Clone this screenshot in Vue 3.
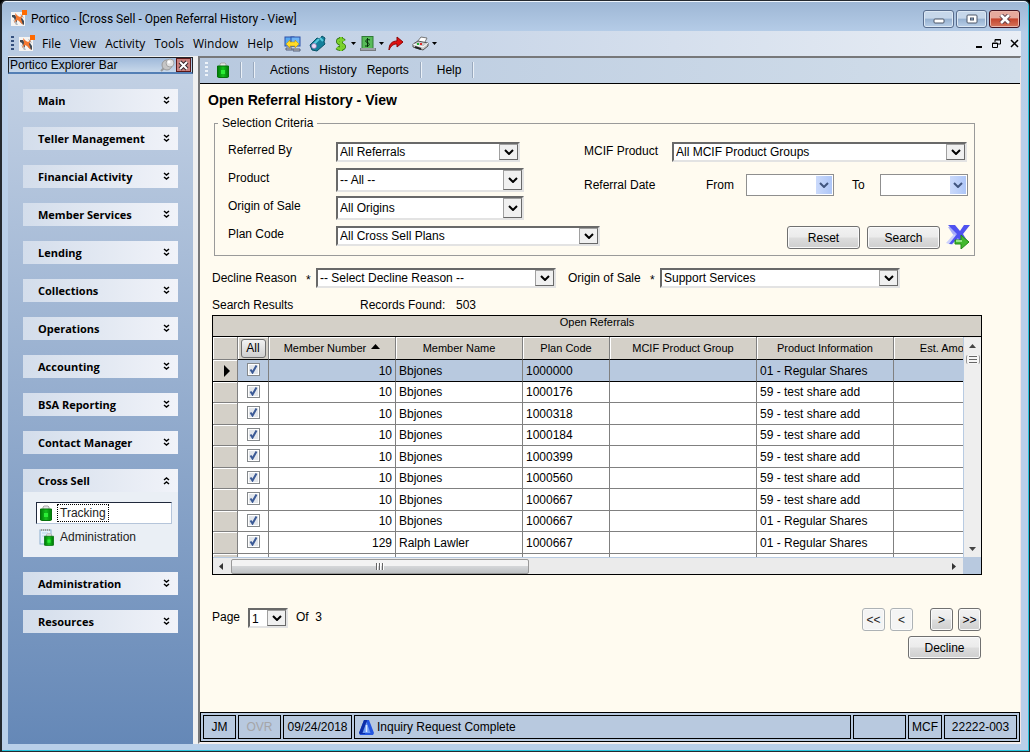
<script setup>
import { ref } from 'vue'

const menus = ['File', 'View', 'Activity', 'Tools', 'Window', 'Help']
const groups = [
  'Main', 'Teller Management', 'Financial Activity', 'Member Services', 'Lending',
  'Collections', 'Operations', 'Accounting', 'BSA Reporting', 'Contact Manager',
  'Cross Sell', 'Administration', 'Resources'
]
const openGroup = ref('Cross Sell')

const filters = [
  { id: 'referred', label: 'Referred By', value: 'All Referrals', size: 'w-short' },
  { id: 'product', label: 'Product', value: '-- All --', size: 'w-mid tall' },
  { id: 'origin', label: 'Origin of Sale', value: 'All Origins', size: 'w-mid tall' },
  { id: 'plan', label: 'Plan Code', value: 'All Cross Sell Plans', size: 'w-long' }
]

const rows = ref([
  ['10', 'Bbjones', '1000000', '01 - Regular Shares'],
  ['10', 'Bbjones', '1000176', '59 - test share add'],
  ['10', 'Bbjones', '1000318', '59 - test share add'],
  ['10', 'Bbjones', '1000184', '59 - test share add'],
  ['10', 'Bbjones', '1000399', '59 - test share add'],
  ['10', 'Bbjones', '1000560', '59 - test share add'],
  ['10', 'Bbjones', '1000667', '59 - test share add'],
  ['10', 'Bbjones', '1000667', '01 - Regular Shares'],
  ['129', 'Ralph Lawler', '1000667', '01 - Regular Shares']
].map(([number, name, plan, product]) => ({ number, name, plan, product, checked: true })))
</script>

<template>
  <div class="window">
    <svg class="defs" width="0" height="0" aria-hidden="true">
      <defs>
        <linearGradient id="green" x1="0" x2="1">
          <stop offset="0" stop-color="#007a08" /><stop offset=".5" stop-color="#14c01c" /><stop offset="1" stop-color="#007a08" />
        </linearGradient>
        <symbol id="logo" viewBox="0 0 17 17">
          <rect y="2" width="14" height="14" fill="#f6f4f2" />
          <path d="M1 5h3l2 3v5l-2-2-1-3-2-1z" fill="#3f4a55" />
          <path d="M8 7l3 1 2 3v4l-3-2-2-3z" fill="#3f4a55" />
          <path d="M2 10l3 1 2 4H5z" fill="#b4b9bf" />
          <path d="M9 4l2 1 2 3-2-1z" fill="#9aa0a8" />
          <path d="M4 3l3 3 2 1 3-2-2 4 2 6-4-4-2-1-3 3 2-5z" fill="#f4772f" />
          <rect x="11" y="0" width="5" height="5" fill="#ff6a00" />
        </symbol>
        <symbol id="bag" viewBox="0 0 12 16">
          <path d="M3 5V2l1-1h4l1 1v3" fill="#e6e6e6" stroke="#a9a9a9" />
          <path d="M.5 4h11v11l-1 .500h-9l-1-.500z" fill="url(#green)" stroke="#04720a" />
          <rect x="4" y="8" width="4" height="4" fill="#2bec36" />
        </symbol>
        <symbol id="down" viewBox="0 0 10 6">
          <path d="M1 1l4 4 4-4" fill="none" stroke="currentColor" stroke-width="2" />
        </symbol>
        <symbol id="chev" viewBox="0 0 7 9">
          <path d="M1 1l2.500 2L6 1M1 5l2.500 2L6 5" fill="none" stroke="#000" stroke-width="1.500" />
        </symbol>
        <symbol id="caret" viewBox="0 0 5 3"><path d="M0 0h5L2.500 3z" fill="#000" /></symbol>
      </defs>
    </svg>

    <header class="titlebar">
      <svg width="17" height="17" aria-hidden="true"><use href="#logo" /></svg>
      <span class="title">Portico - [Cross Sell - Open Referral History - View]</span>
      <div class="winbtns">
        <button class="wb" aria-label="Minimize"><svg width="12" height="10"><rect x="1" y="5" width="10" height="4" rx="1" fill="#fff" stroke="#4c5768" /></svg></button>
        <button class="wb" aria-label="Maximize"><svg width="12" height="10"><rect x="1" y="1" width="10" height="8" rx="1" fill="#fff" stroke="#4c5768" /><rect x="4.500" y="4" width="3" height="2" fill="#8fb1d6" stroke="#4c5768" /></svg></button>
        <button class="wb close" aria-label="Close"><svg width="12" height="10"><path d="M2 1l8 8M10 1l-8 8" stroke="#5a3a44" stroke-width="4.500" /><path d="M2 1l8 8M10 1l-8 8" stroke="#fff" stroke-width="2.600" /></svg></button>
      </div>
    </header>

    <div class="client">
      <nav class="menubar" aria-label="Main menu">
        <span class="grip dark"></span>
        <svg class="menulogo" width="17" height="17" aria-hidden="true"><use href="#logo" /></svg>
        <button v-for="m in menus" :key="m" class="menu">{{ m }}</button>
        <div class="tools">
          <button aria-label="Transfer"><svg width="17" height="16">
            <rect x="1" y="1" width="9" height="9" fill="#58a8f0" stroke="#2c50a8" /><rect x="7" y="1" width="9" height="9" fill="#6fb4f4" stroke="#2c50a8" />
            <path d="M2 12h6v2H2zM9 13h7v2H9z" fill="#c8c4bc" stroke="#55617c" />
            <path d="M2 8l4-4v2h5V4l4 4-4 4v-2H6v2z" fill="#ffdc28" stroke="#b58a00" stroke-width=".5" /></svg></button>
          <button aria-label="Lookup"><svg width="17" height="17">
            <path d="M1 10l7-7 3 1 2-3 3 2-1 4 1 2-8 7-5-1z" fill="#14809c" stroke="#075267" /><path d="M4 10l6-6M11 3l3 3" stroke="#55c9dc" stroke-width="2" /><circle cx="5" cy="11" r="2.500" fill="#eadcf4" stroke="#885aa0" stroke-width=".6" /></svg></button>
          <button class="drop" aria-label="Money"><svg width="14" height="16">
            <path d="M10 5C9 3 4 3 4 5.500s6 2.500 6 5-5 3-7 1M7 1v14" fill="none" stroke="#2b6c10" stroke-width="4" /><path d="M10 5C9 3 4 3 4 5.500s6 2.500 6 5-5 3-7 1M7 1v14" fill="none" stroke="#7bd22c" stroke-width="2.500" /></svg><svg width="5" height="3"><use href="#caret" /></svg></button>
          <button class="drop" aria-label="Cash drawer"><svg width="16" height="16">
            <rect x="2" y=".5" width="11" height="12" fill="#58bb58" stroke="#2f7a35" /><path d="M10 4C7 3 5 4 6 6c4 1 4 3 2 4H5M7.500 2v9" fill="none" stroke="#06320b" /><path d="M0 12h16v3H0z" fill="#777b80" /><path d="M1 13h14" stroke="#c5c8cb" /></svg><svg width="5" height="3"><use href="#caret" /></svg></button>
          <button aria-label="Forward"><svg width="16" height="15"><path d="M1 14c0-6 3-9 8-9V1l6 5-6 5V8c-4 0-6 2-8 6z" fill="#e01010" stroke="#8c0505" /></svg></button>
          <button class="drop" aria-label="Print"><svg width="17" height="15">
            <path d="M5 6l4-5 6 1-3 6z" fill="#fff" stroke="#777" /><path d="M1 8l5-3 10 2v3l-5 4-10-3z" fill="#c9c9c9" stroke="#555" /><path d="M1 8l10 3 5-4" fill="none" stroke="#fff" /><path d="M3 11l6 2" stroke="#222" stroke-width="2" /><rect x="5" y="7" width="2" height="2" fill="#20b030" /><rect x="8" y="7" width="2" height="2" fill="#e02a2a" /></svg><svg width="5" height="3"><use href="#caret" /></svg></button>
        </div>
        <div class="mdi">
          <button aria-label="Minimize document"><svg width="8" height="9"><path d="M1 8h6" stroke="#000" stroke-width="2" /></svg></button>
          <button aria-label="Restore document"><svg width="9" height="9"><path d="M3 3V.5h5.500V5H6M.5 4h5v4.500h-5zM3 1h6M0 4.500h6" fill="none" stroke="#000" /></svg></button>
          <button aria-label="Close document"><svg width="9" height="9"><path d="M1 1l7 7M8 1L1 8" stroke="#000" stroke-width="1.500" /></svg></button>
        </div>
      </nav>

      <div class="body">
        <aside class="sidebar">
          <div class="barhead">
            <span>Portico Explorer Bar</span>
            <button class="pin" aria-label="Pin"><svg width="15" height="14"><path d="M1 13l4-4" stroke="#999" stroke-width="2" /><ellipse cx="7" cy="7" rx="5" ry="5" fill="#c6c6c6" stroke="#9a9a9a" /><circle cx="10" cy="5" r="4" fill="#e2e2e2" stroke="#a5a5a5" /><circle cx="9" cy="4" r="1.500" fill="#fff" /></svg></button>
            <button class="barclose" aria-label="Close bar"><svg width="11" height="11"><path d="M2 2l7 7M9 2L2 9" stroke="#33262c" stroke-width="4" /><path d="M2 2l7 7M9 2L2 9" stroke="#fff" stroke-width="2" /></svg></button>
          </div>
          <nav class="groups" aria-label="Explorer">
            <section v-for="g in groups" :key="g">
              <button class="group" @click="openGroup = g">
                {{ g }}
                <svg width="7" height="9" :class="{ flip: openGroup === g }" aria-hidden="true"><use href="#chev" /></svg>
              </button>
              <div v-if="g === 'Cross Sell' && openGroup === g" class="panel">
                <a href="#tracking" class="item active">
                  <svg width="12" height="16" aria-hidden="true"><use href="#bag" /></svg><span>Tracking</span>
                </a>
                <a href="#administration" class="item">
                  <svg width="16" height="17" aria-hidden="true"><rect x="1" y="1" width="11" height="14" fill="#e5f1fa" stroke="#8cafd0" /><path d="M2 1h9" stroke="#8a6b3a" stroke-dasharray="1 1" /><path d="M3 4h6M3 7h4" stroke="#b9d4ea" /><use href="#bag" x="5" y="4" width="10" height="13" /></svg><span>Administration</span>
                </a>
              </div>
            </section>
          </nav>
        </aside>

        <main class="main">
          <nav class="toolbar" aria-label="Page menu">
            <span class="grip"></span>
            <button class="bagbtn" aria-label="Tracking"><svg width="12" height="16"><use href="#bag" /></svg></button>
            <i class="sep"></i><i class="sep"></i>
            <button class="act">Actions</button><button class="act">History</button><button class="act">Reports</button>
            <i class="sep"></i>
            <button class="act">Help</button>
            <i class="sep"></i>
          </nav>

          <div class="content">
            <h1>Open Referral History - View</h1>
            <fieldset>
              <legend>Selection Criteria</legend>
              <div class="criteria">
                <div class="left">
                  <div v-for="f in filters" :key="f.id" class="frow">
                    <label :for="f.id">{{ f.label }}</label>
                    <span class="combo" :class="f.size">
                      <select :id="f.id"><option>{{ f.value }}</option></select>
                      <span class="arrow"><svg width="10" height="6"><use href="#down" /></svg></span>
                    </span>
                  </div>
                </div>
                <div class="right">
                  <div class="frow">
                    <label class="lab" for="mcif">MCIF Product</label>
                    <span class="combo grow">
                      <select id="mcif"><option>All MCIF Product Groups</option></select>
                      <span class="arrow"><svg width="10" height="6"><use href="#down" /></svg></span>
                    </span>
                  </div>
                  <div class="frow dates">
                    <span class="grow">Referral Date</span>
                    <label for="from">From</label>
                    <span class="date"><input id="from" type="text"><button aria-label="Pick start date"><svg width="10" height="6"><use href="#down" /></svg></button></span>
                    <label for="to" class="to">To</label>
                    <span class="date"><input id="to" type="text"><button aria-label="Pick end date"><svg width="10" height="6"><use href="#down" /></svg></button></span>
                  </div>
                  <div class="actions">
                    <button class="btn">Reset</button>
                    <button class="btn">Search</button>
                    <button class="export" aria-label="Export"><svg width="24" height="24">
                      <path d="M2 2h8l9 15h-7z" fill="#a9adf8" /><path d="M0 18l8-9 4 4-6 7z" fill="#cdd1fb" /><path d="M2 0h7l5 6 4-6h6l-7 9 5 8-6 2-4-6-6 6H3l8-10z" fill="#4f52f0" />
                      <path d="M9 15h6v-5l8 7-8 7v-5H9z" fill="#43b82e" stroke="#258a17" /><path d="M10 16h6" stroke="#93e384" stroke-width="2" /></svg></button>
                  </div>
                </div>
              </div>
            </fieldset>

            <div class="reason">
              <label class="l1" for="reason">Decline Reason</label><span class="star">*</span>
              <span class="combo"><select id="reason"><option>-- Select Decline Reason --</option></select><span class="arrow"><svg width="10" height="6"><use href="#down" /></svg></span></span>
              <label class="l2" for="sale">Origin of Sale</label><span class="star">*</span>
              <span class="combo"><select id="sale"><option>Support Services</option></select><span class="arrow"><svg width="10" height="6"><use href="#down" /></svg></span></span>
            </div>

            <div class="results"><span class="rl">Search Results</span><span class="rf">Records Found:</span><span>503</span></div>

            <div class="grid">
              <div class="caption">Open Referrals</div>
              <div class="view">
                <div class="pane">
                  <table>
                    <colgroup><col class="c0"><col class="c1"><col class="c2"><col class="c2"><col class="c4"><col class="c5"><col class="c6"><col class="c7"></colgroup>
                    <thead>
                      <tr>
                        <th></th>
                        <th><button class="all">All</button></th>
                        <th>Member Number <svg width="9" height="5"><path d="M0 5h9L4.500 0z" fill="#000" /></svg></th>
                        <th>Member Name</th><th>Plan Code</th><th>MCIF Product Group</th><th>Product Information</th><th>Est. Amount</th>
                      </tr>
                    </thead>
                    <tbody>
                      <tr v-for="(r, i) in rows" :key="i" :class="{ sel: i === 0 }">
                        <td class="rowhead"><svg v-if="i === 0" width="6" height="12"><path d="M0 0v12l6-6z" fill="#000" /></svg></td>
                        <td class="chk"><input v-model="r.checked" type="checkbox" :aria-label="'Select plan ' + r.plan"></td>
                        <td class="num">{{ r.number }}</td><td>{{ r.name }}</td><td>{{ r.plan }}</td><td></td><td>{{ r.product }}</td><td></td>
                      </tr>
                      <tr><td class="rowhead"></td><td></td><td></td><td></td><td></td><td></td><td></td><td></td></tr>
                    </tbody>
                  </table>
                </div>
                <div class="vscroll">
                  <svg width="7" height="4"><path d="M0 4h7L3.500 0z" fill="#444" /></svg>
                  <span class="vthumb"></span>
                  <svg class="end" width="7" height="4"><path d="M0 0h7L3.500 4z" fill="#444" /></svg>
                </div>
              </div>
              <div class="hrow">
                <div class="hscroll">
                  <svg class="harrow" width="4" height="7"><path d="M4 0v7L0 3.500z" fill="#333" /></svg>
                  <span class="hthumb"><i></i><i></i><i></i></span>
                  <svg class="harrow end" width="4" height="7"><path d="M0 0v7l4-3.500z" fill="#333" /></svg>
                </div>
                <span class="corner"></span>
              </div>
            </div>

            <div class="pager">
              <label for="page">Page</label>
              <span class="combo pg"><select id="page"><option>1</option></select><span class="arrow"><svg width="10" height="6"><use href="#down" /></svg></span></span>
              <span class="of">Of&nbsp; 3</span>
              <div class="nav">
                <button class="btn sq" disabled>&lt;&lt;</button><button class="btn sq" disabled>&lt;</button>
                <button class="btn sq next">&gt;</button><button class="btn sq">&gt;&gt;</button>
              </div>
            </div>
            <div class="decline"><button class="btn">Decline</button></div>
          </div>

          <footer class="status">
            <span class="s-jm">JM</span><span class="s-ovr">OVR</span><span class="s-date">09/24/2018</span>
            <span class="s-msg"><svg width="17" height="17" aria-hidden="true"><path d="M6 1h5l5 13-1 2H2l-1-2z" fill="#2456e0" /><path d="M6 1h3L7 15H2l-1-1z" fill="#0d2fa8" /><path d="M8.500 3l4 11h-8z" fill="#6b9af5" /><path d="M8.500 6v7" stroke="#dce8ff" stroke-width="1.500" /></svg>Inquiry Request Complete</span>
            <span class="s-empty"></span><span class="s-mcf">MCF</span><span class="s-code">22222-003</span>
          </footer>
        </main>
      </div>
    </div>
  </div>
</template>

<style>
body { background: #000; }
</style>

<style scoped>
.window, .window * { box-sizing: border-box; }
.window {
  min-height: 100vh; display: flex; flex-direction: column;
  border: solid #24292f; border-width: 1px 1px 1px 2px; border-radius: 6px 6px 0 0;
  box-shadow: inset -1px -1px 0 #27c4dc, inset 0 1px 0 #eef5fc;
  background: linear-gradient(#9db6d4, #b6cde8 32px, #b9cfe9 120px, #b9cfe9);
  font: 12px/16px "Liberation Sans", Arial, sans-serif; color: #000;
}
.defs { position: absolute; }
button { font: inherit; color: inherit; border: 0; padding: 0; background: none; display: flex; align-items: center; justify-content: center; }
svg { display: block; flex: none; }

.titlebar { height: 30px; display: flex; align-items: center; padding: 5px 9px 0 9px; }
.title { margin-left: 3px; flex: 1; white-space: nowrap; font-family: Roboto, "Noto Sans", sans-serif; }
.winbtns { display: flex; gap: 2px; }
.wb { width: 31px; height: 18px; border: 1px solid #586c8c; border-radius: 3px; background: linear-gradient(#c6d7ea 45%, #96b1d0 50%, #b9cfe8); box-shadow: inset 0 0 0 1px #dce8f4; }
.wb.close { border-color: #431422; background: linear-gradient(#e5a99d 42%, #c4452e 50%, #d5755c); box-shadow: inset 0 0 0 1px #eab7ac; }

.client { flex: 1; display: flex; flex-direction: column; margin: 0 8px 7px 6px; background: #f0f0f0; }
.menubar { height: 25px; display: flex; align-items: center; padding: 0 2px 0 3px; background: linear-gradient(90deg, #b9cbe2, #c9d6e8 45%, #e9eef5); font-family: "Open Sans", "Noto Sans", sans-serif; }
.grip { width: 3px; height: 16px; background: repeating-linear-gradient(#eef3f9 0 2px, transparent 2px 4px); }
.grip.dark { background: repeating-linear-gradient(#35507e 0 2px, transparent 2px 4px); }
.menulogo { margin: 0 6px 0 5px; }
.menu { margin-right: 9px; }
.tools { display: flex; gap: 8px; margin-left: 2px; }
.drop { gap: 3px; margin-right: -4px; }
.mdi { margin-left: auto; display: flex; gap: 9px; }

.body { flex: 1; display: flex; }
.sidebar { width: 185px; margin-top: 1px; background: linear-gradient(#c4d2e5, #6588b7); }
.barhead { height: 17px; display: flex; align-items: center; border: 1px solid #22262c; border-bottom: 2px solid #547fb5; background: linear-gradient(#9fb9da, #c8d8ea); padding-left: 1px; }
.barhead span { flex: 1; white-space: nowrap; }
.barclose { width: 15px; height: 14px; border: 1px solid #5b1818; background: #c97f7c; margin: 0 1px 0 1px; }
.groups { display: flex; flex-direction: column; gap: 15px; padding: 15px; }
.group { width: 100%; height: 23px; padding: 0 8px 0 15px; justify-content: space-between; font: bold 11px/16px "Open Sans", "Noto Sans", sans-serif; background: linear-gradient(90deg, #d3ddeb, #f1f3f9); }
.group svg.flip { transform: rotate(180deg); }
.panel { height: 65px; background: #eaeff5; padding: 10px 6px 0 13px; }
.item { display: flex; align-items: center; gap: 7px; height: 22px; padding-left: 3px; margin-bottom: 2px; color: #222; text-decoration: none; }
.item svg { margin-right: -2px; }
.item.active { background: #fff; border: 1px solid #20293c; border-right-color: #b5c5da; border-bottom-color: #b5c5da; }
.item.active span { border: 1px dotted #000; padding: 0 2px; }

.main { flex: 1; min-width: 0; margin-left: 5px; border: solid #77787a; border-width: 2px 0 0 2px; display: flex; flex-direction: column; background: #fffbf0; border-right: 1px solid #f4e6e4; border-bottom: 2px solid #f4eeee; }
.toolbar { height: 26px; display: flex; align-items: center; padding: 0 0 2px 5px; border-bottom: 1px solid #000; background: linear-gradient(90deg, #b8c9df, #d2deea); }
.bagbtn { margin: 0 11px 0 9px; }
.sep { width: 2px; height: 16px; background: #eaf0f7; border-left: 1px solid #99a9be; }
.sep + .sep { margin-left: 11px; }
.act { margin-left: 10px; }
.sep + .act { margin-left: 15px; }
.act + .sep { margin-left: 11px; }

.content { flex: 1; padding: 8px 38px 0 12px; }
h1 { margin: 0 0 7px -4px; font: bold 14px/16px "Liberation Sans", Arial, sans-serif; }
fieldset { margin: 0 7px 0 2px; padding: 7px 4px 5px 3px; border: 1px solid #9a9a9a; min-width: 0; }
legend { padding: 0 4px; }
.criteria { display: flex; padding-left: 10px; }
.left { width: 356px; flex: none; }
.right { flex: 1; min-width: 0; }
.frow { height: 28px; display: flex; align-items: center; padding-right: 3px; }
.left label { width: 108px; flex: none; padding-bottom: 4px; }
.lab { width: 88px; flex: none; padding-bottom: 3px; }
.grow { flex: 1; }
.dates { height: 38px; padding-right: 2px; }
.date { width: 88px; height: 22px; margin-left: 12px; display: flex; border: 1px solid #8f8f8f; background: #fff; padding: 1px; }
.date input { flex: 1; min-width: 0; border: 0; padding: 0 2px; font: inherit; background: none; }
.date button { width: 16px; color: #41557f; background: linear-gradient(90deg, #cbdafb, #aec6f7); }
.to { margin-left: 18px; width: 16px; }
.actions { height: 45px; display: flex; justify-content: flex-end; align-items: flex-end; gap: 7px; }
.export { margin-left: -1px; }

.combo { position: relative; display: inline-flex; flex: none; height: 20px; border: 2px solid #696969; border-right-color: #e3e3e3; border-bottom-color: #e3e3e3; background: #fff; }
.combo.grow { flex: 1; }
.combo.tall { height: 24px; }
.w-short { width: 184px; }
.w-mid { width: 188px; }
.w-long { width: 264px; }
select { appearance: none; width: 100%; border: 0; padding: 0 20px 0 2px; background: #fff; font: inherit; color: #000; border-radius: 0; }
.arrow { position: absolute; top: 0; right: 0; bottom: 0; width: 19px; display: flex; align-items: center; justify-content: center; border: 1px solid #a0a0a0; border-right-color: #696969; border-bottom-color: #696969; background: #f0f0f0; pointer-events: none; }

.btn { width: 73px; height: 23px; border: 1px solid #707070; border-radius: 3px; background: linear-gradient(#f2f2f2, #ebebeb 49%, #dddddd 51%, #cfcfcf); box-shadow: inset 0 0 0 1px #fafafa; }
.btn.sq { width: 23px; }
.btn:disabled { border-color: #adb2b5; background: #f4f4f4; color: #222; }

.reason { display: flex; align-items: center; margin-top: 12px; }
.reason .combo { width: 240px; }
.l1 { width: 94px; }
.l2 { width: 82px; margin-left: 12px; }
.star { width: 10px; padding-top: 4px; line-height: 12px; }
.results { display: flex; margin-top: 9px; }
.rl { width: 148px; }
.rf { width: 96px; }

.grid { margin-top: 2px; border: 1px solid #000; }
.caption { height: 21px; font-size: 11px; line-height: 13px; text-align: center; background: #d4d0c8; border-bottom: 1px solid #000; }
.view { display: flex; height: 220px; }
.pane { flex: 1; min-width: 0; overflow: hidden; background: #fff; }
table { table-layout: fixed; width: 793px; border-collapse: separate; border-spacing: 0; }
.c0 { width: 25px; } .c1 { width: 31px; } .c2 { width: 127px; } .c4 { width: 87px; } .c5 { width: 147px; } .c6 { width: 137px; } .c7 { width: 112px; }
th { height: 23px; padding: 0; font-size: 11px; font-weight: normal; background: #d4d0c8; border-right: 1px solid #808080; border-bottom: 1px solid #000; box-shadow: inset 1px 1px 0 #fff; }
th:first-child { border-bottom-color: #808080; }
th svg { display: inline; vertical-align: 3px; margin-left: 2px; }
.all { width: 25px; height: 19px; margin: 0 auto; font-size: 12px; border: 1px solid #707070; border-radius: 3px; background: linear-gradient(#f2f2f2, #cfcfcf); }
td { height: 22px; padding: 0 3px; border-right: 1px solid #808080; border-bottom: 1px solid #808080; white-space: nowrap; }
tr:nth-child(even) td { height: 21px; }
.sel td { background: #b8c9df; border-bottom-color: #000; }
.sel td.rowhead, .rowhead { background: #d4d0c8; box-shadow: inset 1px 1px 0 #fff; padding: 0 0 0 11px; }
.num { text-align: right; }
.chk { padding: 0; text-align: center; line-height: 0; }
.chk input { appearance: none; margin: 0 0 2px; width: 13px; height: 13px; vertical-align: middle; border: 1px solid #85898c; background: #e3e7ec; box-shadow: inset 0 0 0 1px #fff; }
.chk input:checked { background: #e3e7ec url("data:image/svg+xml,%3Csvg xmlns='http://www.w3.org/2000/svg' width='11' height='11'%3E%3Cpath d='M2.500 5.500l2 3 4-7' fill='none' stroke='%233b5a96' stroke-width='2'/%3E%3C/svg%3E") center no-repeat; }
.vscroll { width: 18px; display: flex; flex-direction: column; align-items: center; padding: 7px 0 6px; border-left: 1px solid #b8cbe2; background: #eeeeee; }
.vthumb { width: 14px; height: 9px; margin-top: 7px; border: solid #999; border-width: 0 1px; border-radius: 2px; background: repeating-linear-gradient(#666 0 1px, transparent 1px 3px) center / 8px 7px no-repeat #f6f6f6; }
.end { margin-top: auto; }
.hrow { display: flex; height: 17px; }
.hscroll { flex: 1; display: flex; align-items: center; padding: 0 7px 0 6px; border-top: 1px solid #b8cbe2; background: #ebebeb; }
.hthumb { width: 298px; height: 15px; margin-left: 8px; display: flex; align-items: center; justify-content: center; gap: 1px; border: 1px solid #999; border-radius: 2px; background: linear-gradient(#f3f3f3 45%, #d4d6d8 50%, #bfc2c5); }
.hthumb i { width: 2px; height: 7px; background: #666; border-right: 1px solid #fff; }
.harrow.end { margin: 0 0 0 auto; }
.corner { width: 18px; background: #b8c9df; }

.pager { display: flex; align-items: flex-start; margin-top: 33px; line-height: 18px; }
.pager label { width: 36px; }
.pg { width: 40px; }
.of { margin-left: 8px; }
.nav { margin-left: auto; display: flex; gap: 5px; }
.next { margin-left: 12px; }
.decline { display: flex; justify-content: flex-end; margin-top: 5px; }
.pager, .decline { padding-right: 1px; }

.status { height: 30px; display: flex; gap: 2px; padding: 2px; border: 1px solid #000; background: #b8c9df; }
.status span { display: flex; align-items: center; justify-content: center; border: 1px solid #000; white-space: nowrap; }
.s-jm { width: 33px; } .s-date { width: 69px; } .s-empty { width: 53px; } .s-mcf { width: 34px; } .s-code { width: 73px; }
.status .s-ovr { width: 43px; color: #a5a5a8; border-color: #000; }
.status .s-msg { flex: 1; justify-content: flex-start; padding-left: 3px; gap: 2px; }
</style>
